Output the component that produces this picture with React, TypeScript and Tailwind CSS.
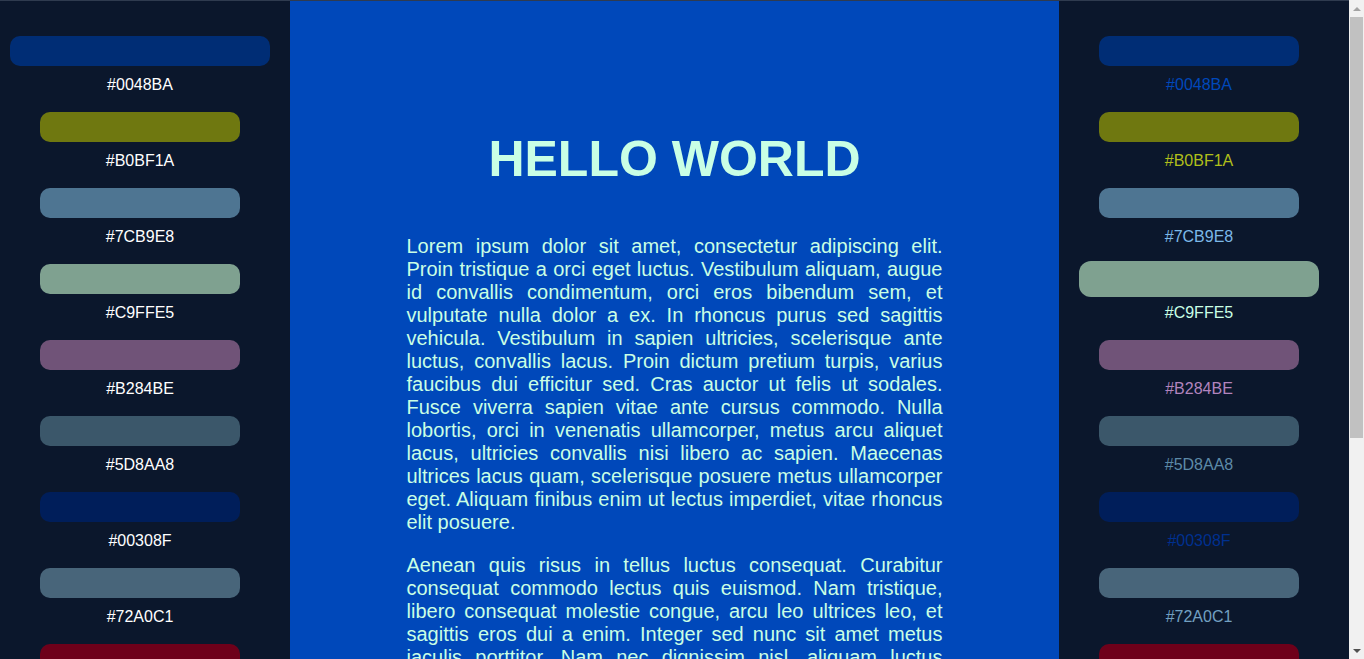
import React from 'react';

const COLORS = [
  '#0048BA',
  '#B0BF1A',
  '#7CB9E8',
  '#C9FFE5',
  '#B284BE',
  '#5D8AA8',
  '#00308F',
  '#72A0C1',
  '#AF002A',
  '#F0F8FF',
  '#84DE02',
  '#E32636',
  '#C46210',
  '#EFDECD',
];

interface SwatchProps {
  color: string;
  wide?: boolean;
  active?: boolean;
  tinted?: boolean;
}

const Swatch: React.FC<SwatchProps> = ({ color, wide, active, tinted }) => {
  return (
    <div className="h-[76px] flex flex-col items-center">
      <div
        className={`h-[30px] rounded-[10px] brightness-[.63] ${wide ? 'w-[260px]' : 'w-[200px]'} ${
          active ? 'scale-[1.2]' : ''
        }`}
        style={{ backgroundColor: color }}
      ></div>
      <span
        className={`mt-[10px] text-[16px] leading-[1.15] ${tinted ? '' : 'text-white'}`}
        style={tinted ? { color } : undefined}
      >
        {color}
      </span>
    </div>
  );
};

// stand-in for the page scrollbar seen in the screenshot
const ScrollBar: React.FC = () => (
  <div className="fixed top-0 right-0 h-screen w-[15px] bg-[#f1f1f1] flex flex-col items-center">
    <div className="h-[17px] flex items-center justify-center">
      <div className="w-0 h-0 border-x-[4px] border-x-transparent border-b-[4px] border-b-[#a3a3a3]"></div>
    </div>
    <div className="w-[13px] h-[421px] bg-[#c1c1c1]"></div>
    <div className="flex-1"></div>
    <div className="h-[17px] flex items-center justify-center">
      <div className="w-0 h-0 border-x-[4px] border-x-transparent border-t-[4px] border-t-[#505050]"></div>
    </div>
  </div>
);

const App: React.FC = () => {
  return (
    <div className="pr-[15px] bg-[#f1f1f1]">
      <div
        className="grid grid-cols-[290px_1fr_290px] min-h-screen border-t border-[#2f3b4f] bg-[#0b172c]"
        style={{ fontFamily: '"Liberation Sans", Arial, sans-serif' }}
      >
        {/* left palette */}
        <aside className="pr-[10px] pt-[35px]">
          {COLORS.map((c, i) => (
            <Swatch key={c} color={c} wide={i === 0} />
          ))}
        </aside>

        <main className="bg-[#0048BA] text-[#C9FFE5] pt-[130px]">
          <h1 className="text-center font-bold text-[50px] leading-[1.15] mb-[46px]">HELLO WORLD</h1>
          <div className="w-[536px] mx-auto text-[20px] leading-[1.15] text-justify">
            <p className="mb-[20px]">
              Lorem ipsum dolor sit amet, consectetur adipiscing elit. Proin tristique a orci eget luctus. Vestibulum
              aliquam, augue id convallis condimentum, orci eros bibendum sem, et vulputate nulla dolor a ex. In
              rhoncus purus sed sagittis vehicula. Vestibulum in sapien ultricies, scelerisque ante luctus, convallis
              lacus. Proin dictum pretium turpis, varius faucibus dui efficitur sed. Cras auctor ut felis ut sodales.
              Fusce viverra sapien vitae ante cursus commodo. Nulla lobortis, orci in venenatis ullamcorper, metus arcu
              aliquet lacus, ultricies convallis nisi libero ac sapien. Maecenas ultrices lacus quam, scelerisque
              posuere metus ullamcorper eget. Aliquam finibus enim ut lectus imperdiet, vitae rhoncus elit posuere.
            </p>
            <p className="mb-[20px]">
              Aenean quis risus in tellus luctus consequat. Curabitur consequat commodo lectus quis euismod. Nam
              tristique, libero consequat molestie congue, arcu leo ultrices leo, et sagittis eros dui a enim. Integer
              sed nunc sit amet metus iaculis porttitor. Nam nec dignissim nisl, aliquam luctus lorem. Donec vel
              mauris sed arcu tincidunt placerat. Suspendisse potenti. Morbi id lacus vitae justo facilisis tempor.
              Duis at magna non purus fermentum cursus sed in velit.
            </p>
          </div>
        </main>

        {/* right palette */}
        <aside className="pr-[10px] pt-[35px]">
          {COLORS.map((c, i) => (
            <Swatch key={c} color={c} active={i === 3} tinted />
          ))}
        </aside>
      </div>
      <ScrollBar />
    </div>
  );
};

export default App;
